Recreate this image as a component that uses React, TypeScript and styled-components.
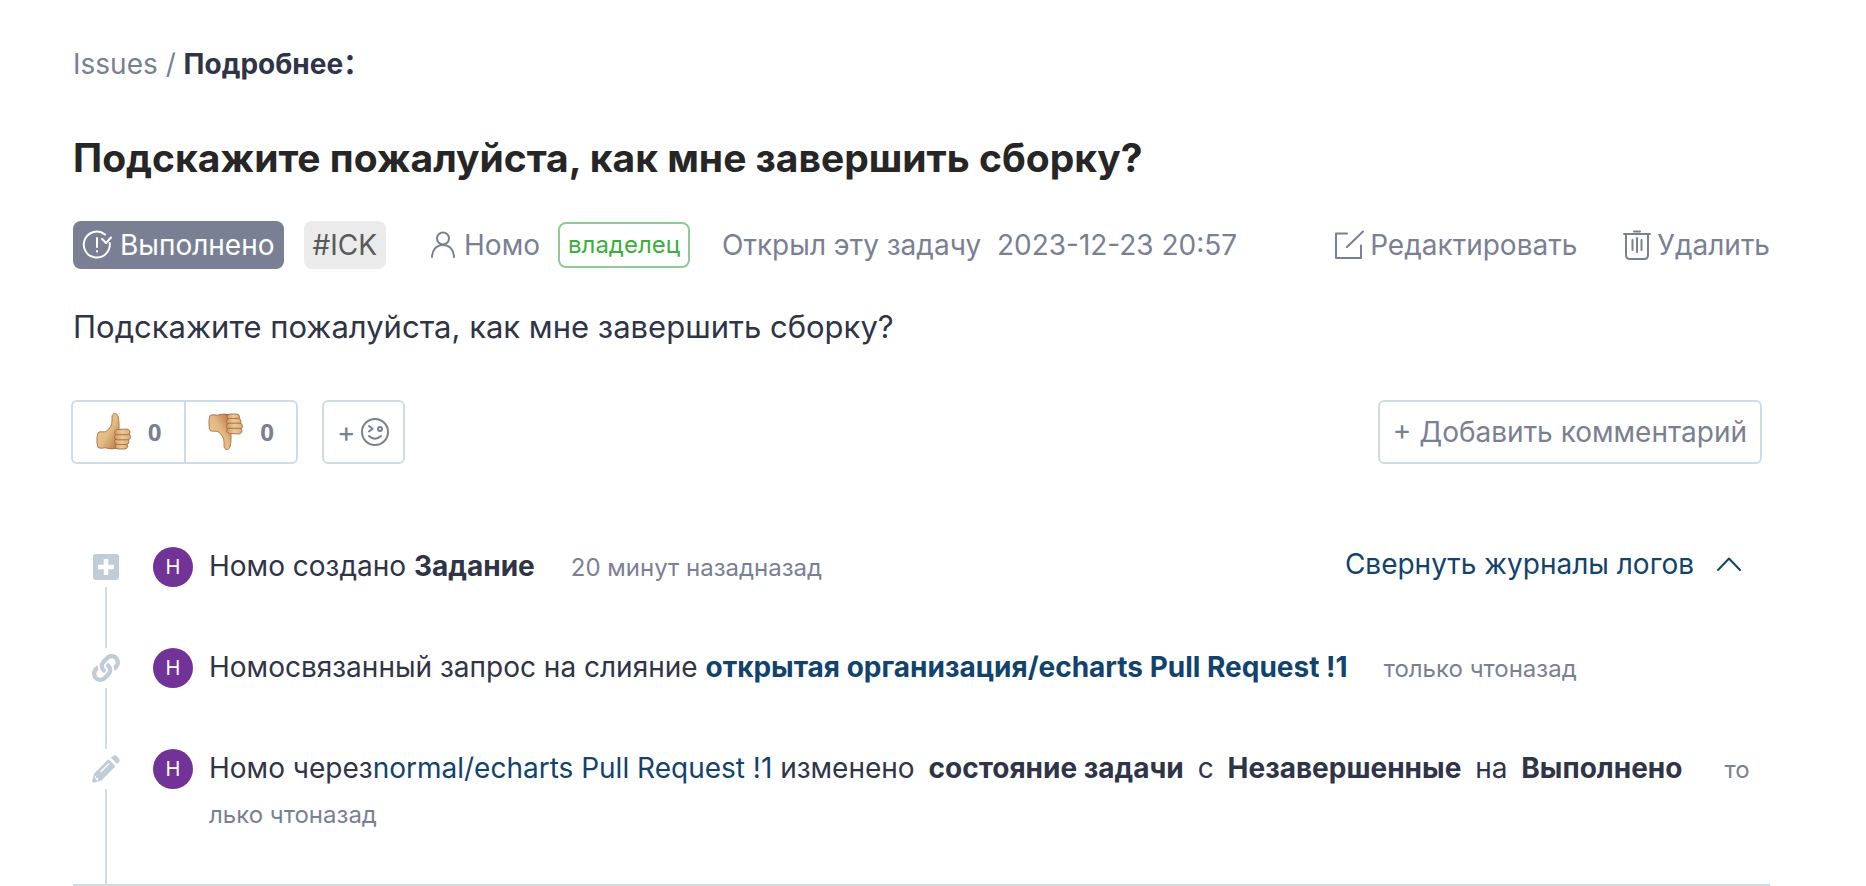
import React from 'react';
import styled, { createGlobalStyle } from 'styled-components';

const Global = createGlobalStyle`
  * { box-sizing: border-box; }
  body { margin: 0; background: #fff; font-family: Inter, "Liberation Sans", sans-serif; font-size: 28px; line-height: 46px; color: #2f3447; }
  h1, p, ul { margin: 0; padding: 0; list-style: none; }
  button { font: inherit; background: none; border: 0; padding: 0; cursor: pointer; }
  a { text-decoration: none; color: #12436d; }
  svg { display: block; flex: none; }
`;

const Page = styled.main`
  padding: 41px 96px 0 73px;
`;

const Breadcrumb = styled.nav`
  height: 46px;
  color: #7a8094;
  a { color: inherit; }
  strong { color: #2f3447; }
`;

const Colon = styled.span`
  font-family: "Noto Sans CJK SC", sans-serif;
  line-height: 24px;
`;

const Title = styled.h1`
  margin-top: 46px;
  font-size: 39px;
  line-height: 50px;
  font-weight: 700;
  color: #262626;
`;

const Meta = styled.div`
  display: flex;
  align-items: center;
  margin-top: 38px;
  height: 48px;
  color: #7a8094;
  white-space: nowrap;
`;

const Tag = styled.span<{ $solid?: boolean }>`
  display: flex;
  align-items: center;
  gap: 8px;
  height: 48px;
  padding: 0 9px;
  border-radius: 8px;
  background: ${p => (p.$solid ? '#7a8094' : '#ebebeb')};
  color: ${p => (p.$solid ? '#fff' : '#595959')};
  margin-right: 20px;
`;

const Author = styled.span`
  display: flex;
  align-items: center;
  gap: 8px;
  margin: 0 18px 0 24px;
`;

const Owner = styled.span`
  border: 2px solid #8fca97;
  border-radius: 8px;
  height: 46px;
  line-height: 42px;
  padding: 0 8px;
  font-size: 24px;
  color: #3ead3e;
`;

const Opened = styled.span`
  margin-left: 32px;
`;

const Actions = styled.div`
  display: flex;
  gap: 46px;
  margin-left: auto;
`;

const Action = styled.button`
  display: flex;
  align-items: center;
  gap: 6px;
  color: #7a8094;
`;

const Body = styled.p`
  margin-top: 34px;
  font-size: 31px;
  line-height: 48px;
`;

const Bar = styled.div`
  display: flex;
  align-items: center;
  margin: 49px 8px 0 -2px;
`;

const Votes = styled.div`
  display: flex;
  border: 2px solid #d0dce4;
  border-radius: 6px;
  margin-right: 24px;
`;

const Vote = styled.button`
  display: flex;
  align-items: center;
  justify-content: center;
  gap: 16px;
  width: 111px;
  height: 60px;
  font-family: "Noto Sans", sans-serif;
  font-size: 24px;
  font-weight: 700;
  color: #7a8094;
  & + & { border-left: 2px solid #d0dce4; width: 112px; }
`;

const Outlined = styled.button`
  display: flex;
  align-items: center;
  gap: 4px;
  height: 64px;
  padding: 0 13px;
  border: 2px solid #d0dce4;
  border-radius: 6px;
  color: #7a8094;
`;

const Push = styled.div`
  margin-left: auto;
`;

const Logs = styled.section`
  margin-top: 83px;
  border-bottom: 2px solid #d0dce4;
`;

const Item = styled.li`
  display: flex;
  min-height: 101px;
  &:last-child { min-height: 135px; }
`;

const Rail = styled.div`
  display: flex;
  flex-direction: column;
  align-items: center;
  width: 66px;
  margin-right: 14px;
  flex: none;
  color: #c0ccd6;
`;

const RailIcon = styled.span`
  display: flex;
  align-items: center;
  height: 40px;
`;

const RailLine = styled.span`
  flex: 1;
  width: 2px;
  background: #d0dce4;
`;

const Avatar = styled.span`
  flex: none;
  width: 40px;
  height: 40px;
  border-radius: 50%;
  background: #723398;
  color: #fff;
  font-size: 20px;
  line-height: 40px;
  text-align: center;
  margin-right: 16px;
`;

const Entry = styled.div`
  flex: 1;
  min-width: 0;
  line-height: 45px;
  margin-top: -3px;
  padding-right: 14px;
`;

const Time = styled.span`
  font-size: 24px;
  line-height: 30px;
  margin-left: 36px;
  color: #7a8094;
  word-break: break-all;
`;

const Word = styled.strong`
  margin: 0 6px;
`;

const Collapse = styled.button`
  display: flex;
  align-items: center;
  gap: 22px;
  margin: -3px 28px 0 auto;
  height: 40px;
  color: #12436d;
`;

const DoneIcon = () => (
  <svg width="30" height="30" viewBox="0 0 30 30" fill="none" stroke="currentColor" strokeWidth="2" strokeLinecap="round" strokeLinejoin="round">
    <path d="M23 4.500A13 13 0 1 0 27.700 13M15 8v9M15 21v.500M20 9l4 4 5-5.500" />
  </svg>
);
const UserIcon = () => (
  <svg width="26" height="28" viewBox="0 0 26 28" fill="none" stroke="currentColor" strokeWidth="2" strokeLinecap="round">
    <circle cx="13" cy="7.500" r="6" /><path d="M2 26c0-7 4.500-12 11-12s11 5 11 12" />
  </svg>
);
const EditIcon = () => (
  <svg width="30" height="30" viewBox="0 0 30 30" fill="none" stroke="currentColor" strokeWidth="2" strokeLinecap="round" strokeLinejoin="round">
    <path d="M13 3.500H2V28h25V15.500M13 17 29 1.500" />
  </svg>
);
const TrashIcon = () => (
  <svg width="28" height="30" viewBox="0 0 28 30" fill="none" stroke="currentColor" strokeWidth="2" strokeLinecap="round">
    <path d="M1 4h26M11 1.500h6M3 4v21q0 4 4 4h14q4 0 4-4V4M9.500 10v10M14 8v14M18.500 10v10" />
  </svg>
);
const ThumbIcon = ({ down }: { down?: boolean }) => (
  <svg width="36" height="40" viewBox="0 0 36 40" stroke="#9a6236" strokeWidth="0.8" strokeLinejoin="round">
    <defs>
      <linearGradient id={down ? 'palmDown' : 'palmUp'} x1="0" y1="0" x2="1" y2="1">
        <stop offset="0" stopColor="#ecd19c" /><stop offset="0.550" stopColor="#e2b982" /><stop offset="1" stopColor="#b8703f" />
      </linearGradient>
      <linearGradient id={down ? 'fingerDown' : 'fingerUp'} x1="0" y1="0" x2="1" y2="0">
        <stop offset="0" stopColor="#d39a66" /><stop offset="0.500" stopColor="#ecc994" /><stop offset="1" stopColor="#dcae78" />
      </linearGradient>
    </defs>
    <g transform={down ? 'matrix(1 0 0 -1 0 39)' : undefined}>
      <path fill={`url(#${down ? 'palmDown' : 'palmUp'})`} d="M1.500 22c.5-2 2-2.300 4-2.200 2 .1 3.500.2 5-.8 3.500-2.500 5.500-6 5.500-10.500C16 6 15.500 2 18.500 1.500c3.500 0 4 4 4.300 7 .4 4 .2 7 .2 10v17c-4 1.800-9 1.800-13.500.3-2.500.4-5.500.8-7.500-.3-1.300-3-1.300-10-.5-13.500Z" />
      <g fill={`url(#${down ? 'fingerDown' : 'fingerUp'})`}>
        <rect x="19" y="31" width="12.500" height="6" rx="3" />
        <rect x="18.500" y="26.500" width="14.500" height="6" rx="3" />
        <rect x="18.500" y="21.800" width="16" height="6" rx="3" />
        <path d="M20 22.700c-2.500-2-1.500-4.500 1.500-5.200l9-.5c4.500.2 4.500 5.500 1 5.700Z" />
      </g>
    </g>
  </svg>
);
const WinkIcon = () => (
  <svg width="30" height="30" viewBox="0 0 30 30" fill="none" stroke="currentColor" strokeWidth="2" strokeLinecap="round" strokeLinejoin="round">
    <circle cx="15" cy="15" r="13" /><path d="m9 9 3.500 2.800L9 14.500M9 19q6 5.500 12 0" /><circle cx="20" cy="12" r="2" />
  </svg>
);
const ChevronIcon = () => (
  <svg width="26" height="16" viewBox="0 0 26 16" fill="none" stroke="currentColor" strokeWidth="2" strokeLinecap="round" strokeLinejoin="round">
    <path d="M2 14 13 2.500 24 14" />
  </svg>
);
const PlusSquareIcon = () => (
  <svg width="26" height="26" viewBox="0 0 26 26"><rect width="26" height="26" rx="3" fill="currentColor" /><path d="M13 5v16M5 13h16" stroke="#fff" strokeWidth="4.500" /></svg>
);
const LinkIcon = () => (
  <svg width="28" height="28" viewBox="0 0 512 512" fill="currentColor">
    <path d="M326.612 185.391c59.747 59.809 58.927 155.698.36 214.590-.110.120-.240.250-.360.370l-67.200 67.200c-59.270 59.270-155.699 59.262-214.960 0-59.270-59.260-59.270-155.700 0-214.960l37.106-37.106c9.840-9.840 26.786-3.300 27.294 10.606.648 17.722 3.826 35.527 9.690 52.721 1.986 5.822.567 12.262-3.783 16.612l-13.087 13.087c-28.026 28.026-28.905 73.660-1.155 101.960 28.024 28.579 74.086 28.749 102.325.510l67.200-67.190c28.191-28.191 28.073-73.757 0-101.830-3.701-3.694-7.429-6.564-10.341-8.569a16.037 16.037 0 0 1-6.947-12.606c-.396-10.567 3.348-21.456 11.698-29.806l21.054-21.055c5.521-5.521 14.182-6.199 20.584-1.731a152.482 152.482 0 0 1 20.522 17.197zM467.547 44.449c-59.261-59.262-155.690-59.270-214.960 0l-67.200 67.200c-.120.120-.250.250-.360.370-58.566 58.892-59.387 154.781.360 214.590a152.454 152.454 0 0 0 20.521 17.196c6.402 4.468 15.064 3.789 20.584-1.731l21.054-21.055c8.350-8.350 12.094-19.239 11.698-29.806a16.037 16.037 0 0 0-6.947-12.606c-2.912-2.005-6.640-4.875-10.341-8.569-28.073-28.073-28.191-73.639 0-101.830l67.200-67.190c28.239-28.239 74.300-28.069 102.325.510 27.750 28.300 26.872 73.934-1.155 101.960l-13.087 13.087c-4.350 4.350-5.769 10.790-3.783 16.612 5.864 17.194 9.042 34.999 9.690 52.721.509 13.906 17.454 20.446 27.294 10.606l37.106-37.106c59.271-59.259 59.271-155.699.001-214.959z" />
  </svg>
);
const PencilIcon = () => (
  <svg width="28" height="28" viewBox="0 0 28 28" fill="currentColor">
    <path d="M19.500 2.500 21 1q2-1.500 4 .5L27 3.500q1.500 2 0 3.500l-2.500 2.500-7-7ZM16.500 4.200l7 7L9.500 25.500 1.500 27.800 0 26.500l2.200-8Z" />
    <path d="M18.200 3 25 9.800" stroke="#fff" strokeWidth="1.500" />
    <path d="M2.500 21.500 4 21v2h2.200v2l-1.200 1Z" fill="#fff" /><path d="m8.500 17 8.500-8.500" stroke="#fff" strokeWidth="1.200" />
  </svg>
);

const LogItem = ({ icon, children, aside }: { icon: React.ReactNode; children: React.ReactNode; aside?: React.ReactNode }) => (
  <Item>
    <Rail><RailIcon>{icon}</RailIcon><RailLine /></Rail>
    <Avatar>Н</Avatar>
    <Entry>{children}</Entry>
    {aside}
  </Item>
);

export default function App() {
  return (
    <Page>
      <Global />
      <Breadcrumb><a href="#issues">Issues</a> / <strong>Подробнее<Colon lang="zh-CN">：</Colon></strong></Breadcrumb>
      <Title>Подскажите пожалуйста, как мне завершить сборку?</Title>
      <Meta>
        <Tag $solid><DoneIcon />Выполнено</Tag>
        <Tag>#ICK</Tag>
        <Author><UserIcon />Номо</Author>
        <Owner>владелец</Owner>
        <Opened>Открыл эту задачу&nbsp; 2023-12-23 20:57</Opened>
        <Actions>
          <Action><EditIcon />Редактировать</Action>
          <Action><TrashIcon />Удалить</Action>
        </Actions>
      </Meta>
      <Body>Подскажите пожалуйста, как мне завершить сборку?</Body>
      <Bar>
        <Votes>
          <Vote><ThumbIcon />0</Vote>
          <Vote><ThumbIcon down />0</Vote>
        </Votes>
        <Outlined aria-label="Добавить реакцию">+<WinkIcon /></Outlined>
        <Push><Outlined>+ Добавить комментарий</Outlined></Push>
      </Bar>
      <Logs>
        <ul>
          <LogItem icon={<PlusSquareIcon />} aside={<Collapse>Свернуть журналы логов<ChevronIcon /></Collapse>}>
            Номо создано <strong>Задание</strong><Time>20 минут назадназад</Time>
          </LogItem>
          <LogItem icon={<LinkIcon />}>
            Номосвязанный запрос на слияние <a href="#pr"><strong>открытая организация/echarts Pull Request !1</strong></a><Time>только чтоназад</Time>
          </LogItem>
          <LogItem icon={<PencilIcon />}>
            Номо через<a href="#pr">normal/echarts Pull Request !1</a> изменено <Word>состояние задачи</Word> с <Word>Незавершенные</Word> на <Word>Выполнено</Word><Time>только чтоназад</Time>
          </LogItem>
        </ul>
      </Logs>
    </Page>
  );
}
